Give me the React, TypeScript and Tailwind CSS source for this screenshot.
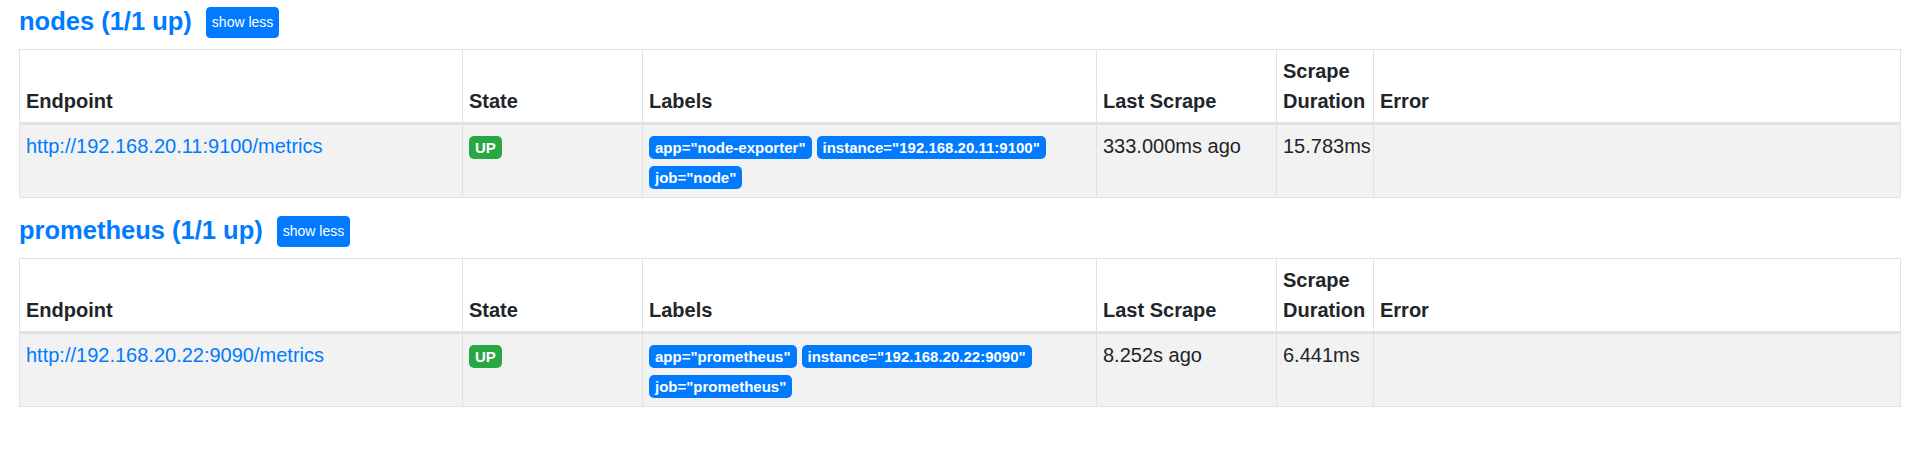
import React from 'react';

type Pool = {
  name: string;
  endpoint: string;
  labels: string[];
  lastScrape: string;
  duration: string;
};

const pools: Pool[] = [
  {
    name: 'nodes',
    endpoint: 'http://192.168.20.11:9100/metrics',
    labels: ['app="node-exporter"', 'instance="192.168.20.11:9100"', 'job="node"'],
    lastScrape: '333.000ms ago',
    duration: '15.783ms',
  },
  {
    name: 'prometheus',
    endpoint: 'http://192.168.20.22:9090/metrics',
    labels: ['app="prometheus"', 'instance="192.168.20.22:9090"', 'job="prometheus"'],
    lastScrape: '8.252s ago',
    duration: '6.441ms',
  },
];

const th =
  'border border-[#dee2e6] border-b-[3px] px-[6px] py-[6px] text-left align-bottom font-bold leading-[30px]';
const td = 'border border-[#dee2e6] px-[6px] py-[6px] align-top leading-[30px]';
const badge =
  'inline-block rounded-[5px] px-[6px] py-[3.75px] text-[15px] font-bold leading-none text-white';

function ScrapePool({ pool }: { pool: Pool }) {
  return (
    <div className="mb-[11px]">
      <div className="flex h-[39px] items-start">
        <a href={`#${pool.name}`} className="mt-[6px] text-[25.5px] font-bold leading-[30px] text-[#007bff]">
          {pool.name} (1/1 up)
        </a>
        <button className="ml-[14px] mt-[7px] h-[31px] rounded-[4px] border border-[#007bff] bg-[#007bff] px-[5px] text-[14px] leading-[21px] text-white">
          show less
        </button>
      </div>
      <table className="mt-[10px] w-full table-fixed border-collapse text-[20px] text-[#212529]">
        <colgroup>
          <col className="w-[443px]" />
          <col className="w-[180px]" />
          <col className="w-[454px]" />
          <col className="w-[180px]" />
          <col className="w-[97px]" />
          <col />
        </colgroup>
        <thead>
          <tr>
            <th className={th}>Endpoint</th>
            <th className={th}>State</th>
            <th className={th}>Labels</th>
            <th className={th}>Last Scrape</th>
            <th className={th}>Scrape Duration</th>
            <th className={th}>Error</th>
          </tr>
        </thead>
        <tbody>
          <tr className="bg-[#f2f2f2]">
            <td className={td}>
              <a href={pool.endpoint} className="text-[#007bff]">
                {pool.endpoint}
              </a>
            </td>
            <td className={td}>
              <span className={`${badge} bg-[#28a745]`}>UP</span>
            </td>
            <td className={td}>
              {pool.labels.map((l) => (
                <span key={l} className={`${badge} mr-[5px] bg-[#007bff]`}>
                  {l}
                </span>
              ))}
            </td>
            <td className={td}>{pool.lastScrape}</td>
            <td className={td}>{pool.duration}</td>
            <td className={td}></td>
          </tr>
        </tbody>
      </table>
    </div>
  );
}

export default function App() {
  return (
    <div className="min-h-[464px] bg-white px-[19px] font-['Liberation_Sans',Arial,sans-serif]">
      {pools.map((p) => (
        <ScrapePool key={p.name} pool={p} />
      ))}
    </div>
  );
}
